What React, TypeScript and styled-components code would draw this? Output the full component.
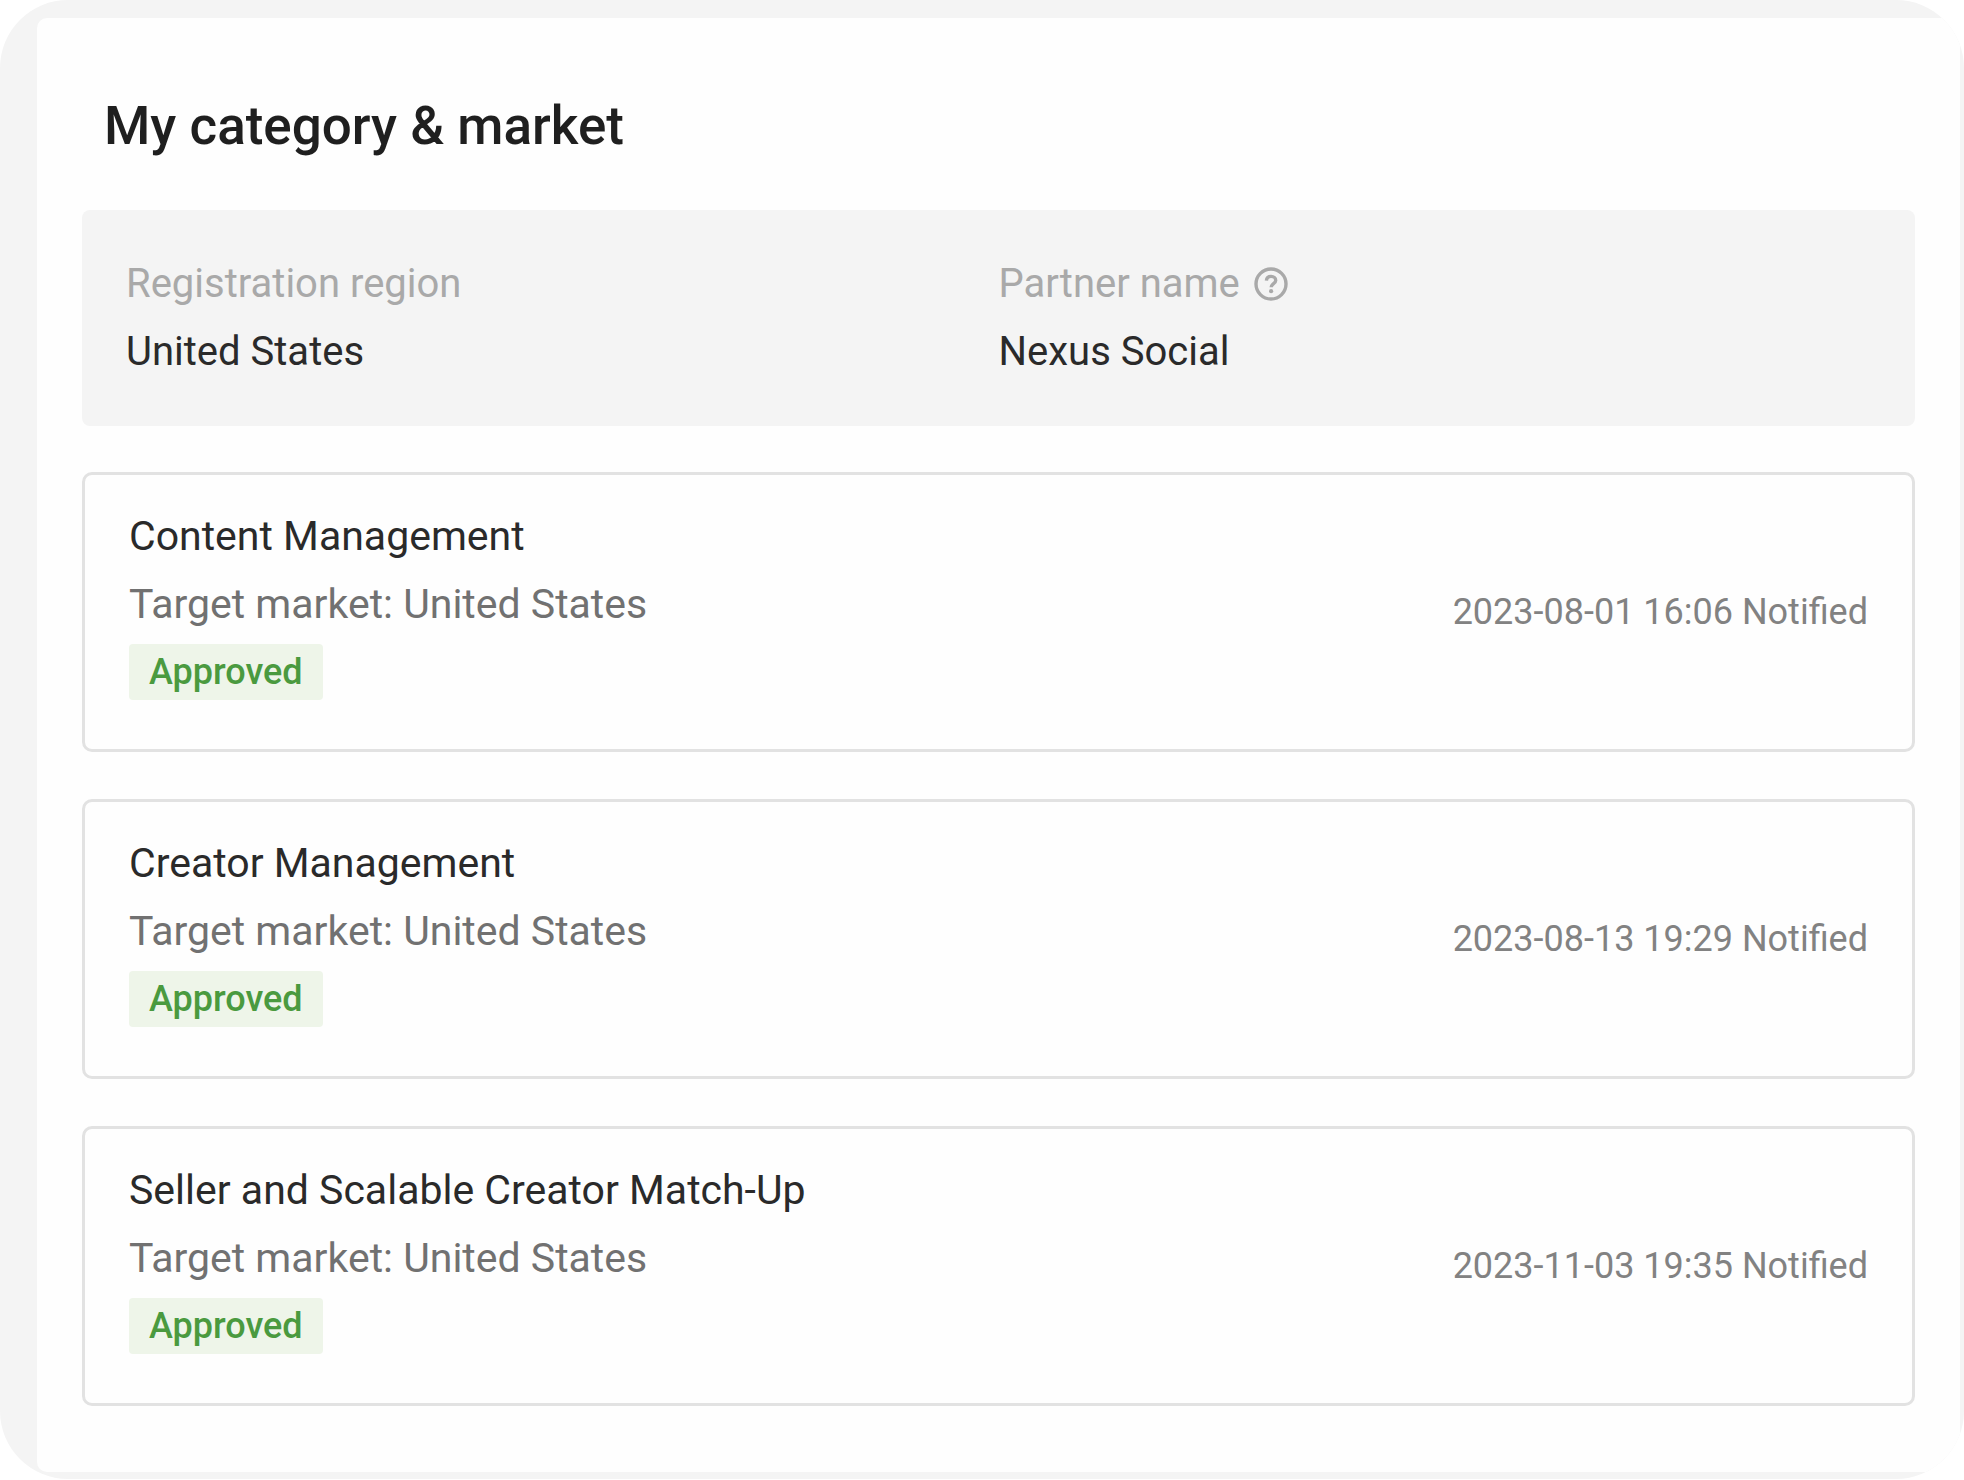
import React from "react";
import styled, { createGlobalStyle } from "styled-components";

const GlobalStyle = createGlobalStyle`
  *, *::before, *::after { box-sizing: border-box; }
  body {
    margin: 0;
    background: #ffffff;
    font-family: Roboto, "Liberation Sans", sans-serif;
    color: #2a2a2a;
  }
`;

const Shell = styled.div`
  padding: 18px 4px 7px 37px;
  border-radius: 68px;
  background: #f4f4f4;
  overflow: hidden;
`;

const Sheet = styled.main`
  display: flex;
  flex-direction: column;
  padding: 78px 45px 66px;
  border-radius: 10px;
  background: #fefefe;
`;

const Title = styled.h1`
  margin: 0 0 54px;
  padding: 0 22px;
  font-size: 53px;
  font-weight: 500;
  line-height: 60px;
  color: #1f1f1f;
`;

const Summary = styled.dl`
  display: grid;
  grid-template-columns: 1fr 1fr;
  margin: 0 0 46px;
  padding: 40px 44px;
  border-radius: 8px;
  background: #f4f4f4;
  font-size: 40px;
  line-height: 68px;
`;

const Term = styled.dt`
  display: flex;
  align-items: center;
  gap: 14px;
  color: #a9a9a9;
`;

const Detail = styled.dd`
  margin: 0;
`;

const HelpButton = styled.button`
  display: flex;
  padding: 0;
  border: 0;
  background: none;
  color: inherit;
  cursor: pointer;
`;

const CategoryList = styled.ul`
  display: flex;
  flex-direction: column;
  gap: 47px;
  margin: 0;
  padding: 0;
  list-style: none;
`;

const Card = styled.li`
  display: flex;
  align-items: center;
  justify-content: space-between;
  gap: 40px;
  padding: 0 44px;
  border: 3px solid #e2e2e2;
  border-radius: 10px;
`;

const Info = styled.div`
  padding: 27px 0 49px;
`;

const Name = styled.h2`
  margin: 0;
  font-size: 41px;
  font-weight: 400;
  line-height: 68px;
`;

const Market = styled.p`
  margin: 0 0 6px;
  font-size: 41px;
  line-height: 68px;
  color: #717171;
`;

const Badge = styled.span`
  display: block;
  width: fit-content;
  padding: 0 20px;
  border-radius: 4px;
  background: #eef5e9;
  color: #4a9a3f;
  font-size: 36px;
  font-weight: 500;
  line-height: 56px;
`;

const Stamp = styled.p`
  margin: 0;
  font-size: 36px;
  line-height: 56px;
  color: #828282;
  white-space: nowrap;
`;

const categories = [
  { name: "Content Management", market: "United States", date: "2023-08-01 16:06" },
  { name: "Creator Management", market: "United States", date: "2023-08-13 19:29" },
  { name: "Seller and Scalable Creator Match-Up", market: "United States", date: "2023-11-03 19:35" },
];

function HelpIcon() {
  return (
    <svg width="34" height="34" viewBox="0 0 34 34" fill="none" stroke="currentColor" aria-hidden="true">
      <circle cx="17" cy="17" r="15" strokeWidth="3.4" />
      <path d="M12.4 13.6c.2-2.7 2.1-4.2 4.7-4.2s4.6 1.6 4.6 4c0 3.2-4.5 3.2-4.5 6.8" strokeWidth="3.4" />
      <circle cx="17.1" cy="24.2" r="2.1" fill="currentColor" stroke="none" />
    </svg>
  );
}

export default function App() {
  return (
    <>
      <GlobalStyle />
      <Shell>
        <Sheet>
          <Title>My category &amp; market</Title>
          <Summary>
            <div>
              <Term>Registration region</Term>
              <Detail>United States</Detail>
            </div>
            <div>
              <Term>
                Partner name
                <HelpButton type="button" aria-label="About partner name">
                  <HelpIcon />
                </HelpButton>
              </Term>
              <Detail>Nexus Social</Detail>
            </div>
          </Summary>
          <CategoryList>
            {categories.map((category) => (
              <Card key={category.name}>
                <Info>
                  <Name>{category.name}</Name>
                  <Market>Target market: {category.market}</Market>
                  <Badge>Approved</Badge>
                </Info>
                <Stamp>
                  <time dateTime={category.date}>{category.date}</time> Notified
                </Stamp>
              </Card>
            ))}
          </CategoryList>
        </Sheet>
      </Shell>
    </>
  );
}
